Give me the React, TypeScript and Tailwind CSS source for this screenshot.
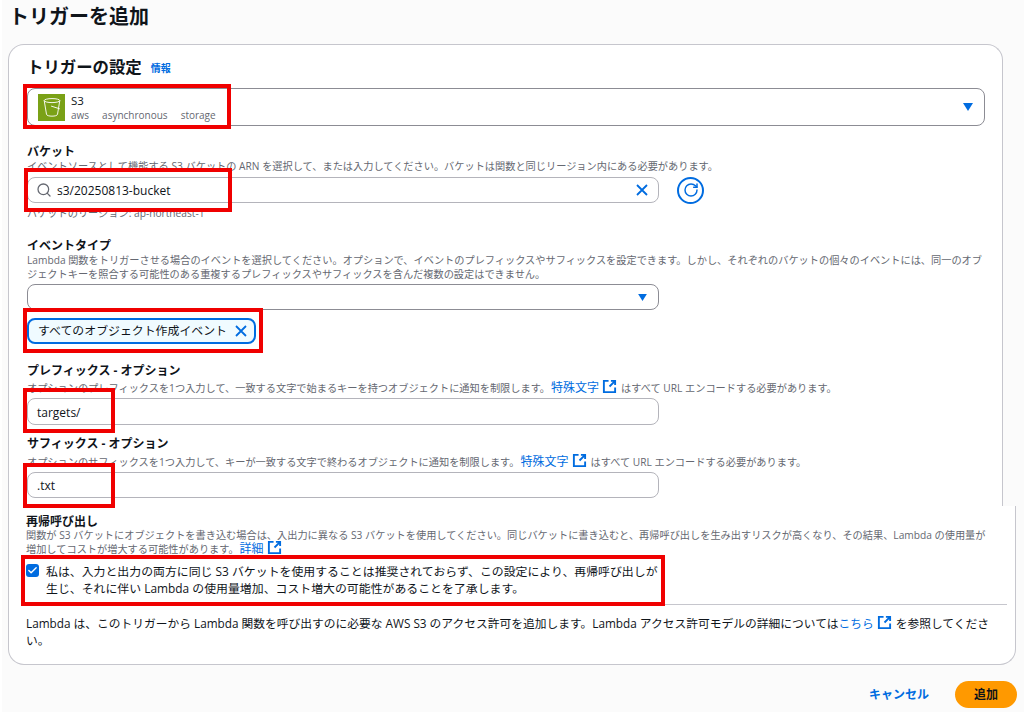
import { Check, RotateCw, Search } from "lucide-react";

const font = { fontFamily: '"Open Sans", "Noto Sans CJK JP", sans-serif' };

function External() {
  return (
    <svg viewBox="0 0 16 16" className="inline-block w-[15px] h-[15px] -my-1 ml-[3px] mr-[4px] align-[2px] text-[#006ce0]" fill="none" stroke="currentColor" strokeWidth="2">
      <path d="M7 2H2v12h12V9" />
      <path d="M9.500 2H14v4.500M14 2 8 8" />
    </svg>
  );
}

function Caret({ className }: { className: string }) {
  return (
    <svg viewBox="0 0 10 8" className={"text-[#006ce0] " + className} fill="currentColor">
      <path d="M0 0h10L5 8z" />
    </svg>
  );
}

function Cross() {
  return (
    <svg viewBox="0 0 12 12" className="w-3 h-3 text-[#006ce0]" fill="none" stroke="currentColor" strokeWidth="1.8">
      <path d="M1 1l10 10M11 1 1 11" />
    </svg>
  );
}

function RedBox({ className }: { className: string }) {
  return <div className={"absolute border-[4px] border-[#f00000] pointer-events-none " + className} />;
}

function Label({ children, className }: { children: React.ReactNode; className?: string }) {
  return <div className={"text-[12px] leading-[15px] font-bold text-[#0f141a] " + (className ?? "")}>{children}</div>;
}

function Desc({ children, className = "" }: { children: React.ReactNode; className?: string }) {
  return <div className={"text-[10.2px] leading-[14px] text-[#656871] " + className}>{children}</div>;
}

function DocLink({ children }: { children: React.ReactNode }) {
  return <a className="ml-[1px] text-[12px] leading-none text-[#006ce0]">{children}</a>;
}

function TextBox({ value, className }: { value: string; className: string }) {
  return (
    <div className={"w-[632px] flex items-center pl-[9px] pt-[2px] text-[12px] text-[#0f141a] bg-white border border-[#b4b4bb] rounded-[8px] " + className}>
      {value}
    </div>
  );
}

export default function App() {
  return (
    <div style={font} className="relative w-[1024px] h-[712px] overflow-hidden bg-white">
      <div className="h-full ml-[2px] bg-[#fbfbfb]">
        <h1 className="h-[44px] pl-[7px] pt-[2px] text-[20px] leading-[30px] font-bold text-[#0f141a]">トリガーを追加</h1>

        {/* upper card */}
        <section className="ml-[6px] w-[995px] bg-white border border-b-0 border-[#c6c6cd] rounded-t-[16px] pl-[18px] pb-2">
          <div className="mt-3 h-5 flex items-center gap-[9px]">
            <h2 className="text-[16.4px] font-bold text-[#0f141a]">トリガーの設定</h2>
            <a className="text-[10px] font-bold text-[#006ce0] mt-[2px]">情報</a>
          </div>

          <div className="mt-[11px] w-[958px] h-[38px] flex items-center justify-between pl-[10px] pr-[11px] border border-[#8c8c94] rounded-[8px]">
            <div className="flex items-center gap-[6px]">
              <div className="w-[27px] h-[27px] bg-[#7aa116] flex items-center justify-center">
                <svg viewBox="0 0 24 24" className="w-[22px] h-[22px]" fill="none" stroke="white" strokeWidth="1">
                  <ellipse cx="12" cy="5" rx="8.500" ry="2.200" />
                  <path d="M3.500 5 6 20c.3 1.400 3 2 6 2s5.700-.6 6-2l2.500-15" />
                  <path d="m11 11 9.500 3" />
                </svg>
              </div>
              <div className="pt-[2px]">
                <div className="text-[11.5px] leading-[14px] text-[#0f141a]">S3</div>
                <div className="flex gap-[13px] text-[10px] leading-[14px] text-[#656871]">
                  <span>aws</span>
                  <span>asynchronous</span>
                  <span>storage</span>
                </div>
              </div>
            </div>
            <Caret className="w-[10px] h-[8px]" />
          </div>

          <Label className="mt-[18px]">バケット</Label>
          <Desc>イベントソースとして機能する S3 バケットの ARN を選択して、または入力してください。バケットは関数と同じリージョン内にある必要があります。</Desc>
          <div className="mt-1 h-[26px] flex items-center gap-[18px]">
            <div className="w-[632px] h-[26px] flex items-center justify-between pl-[8px] pr-[10px] border border-[#b4b4bb] rounded-[8px]">
              <div className="flex items-center gap-[5px] text-[12px] text-[#0f141a]">
                <Search size={16} strokeWidth={1.9} className="text-[#656871]" />
                <span className="pt-[2px]">s3/20250813-bucket</span>
              </div>
              <Cross />
            </div>
            <div className="w-[27px] h-[27px] shrink-0 rounded-full border-2 border-[#006ce0] flex items-center justify-center">
              <RotateCw size={16} strokeWidth={2.2} className="text-[#006ce0]" />
            </div>
          </div>
          <Desc className="mt-[3px]">バケットのリージョン: ap-northeast-1</Desc>

          <Label className="mt-[18px]">イベントタイプ</Label>
          <Desc>
            Lambda 関数をトリガーさせる場合のイベントを選択してください。オプションで、イベントのプレフィックスやサフィックスを設定できます。しかし、それぞれのバケットの個々のイベントには、同一のオブ
            <br />
            ジェクトキーを照合する可能性のある重複するプレフィックスやサフィックスを含んだ複数の設定はできません。
          </Desc>
          <div className="mt-[3px] w-[632px] h-[26px] flex items-center justify-end pr-[11px] border border-[#8c8c94] rounded-[8px]">
            <Caret className="w-[9px] h-[7px]" />
          </div>
          <div className="mt-2 w-[229px] h-[26px] flex items-center justify-between pl-[9px] pr-[7px] bg-[#f0fbff] border-2 border-[#006ce0] rounded-[8px] text-[11.9px] text-[#0f141a]">
            すべてのオブジェクト作成イベント
            <Cross />
          </div>

          <Label className="mt-[19px]">プレフィックス - オプション</Label>
          <Desc className="mt-[3px]">
            オプションのプレフィックスを1つ入力して、一致する文字で始まるキーを持つオブジェクトに通知を制限します。
            <DocLink>特殊文字</DocLink>
            <External />
            はすべて URL エンコードする必要があります。
          </Desc>
          <TextBox value="targets/" className="mt-[3px] h-[27px]" />

          <Label className="mt-[11px]">サフィックス - オプション</Label>
          <Desc className="mt-1">
            オプションのサフィックスを1つ入力して、キーが一致する文字で終わるオブジェクトに通知を制限します。
            <DocLink>特殊文字</DocLink>
            <External />
            はすべて URL エンコードする必要があります。
          </Desc>
          <TextBox value=".txt" className="mt-[3px] h-[26px]" />
        </section>

        {/* lower part of the card */}
        <section className="ml-[6px] w-[1008px] bg-white border border-t-0 border-[#c6c6cd] rounded-b-[16px] pl-[17px] pr-[8px] pt-2 pb-[15px]">
          <Label>再帰呼び出し</Label>
          <Desc className="-mt-px">
            関数が S3 バケットにオブジェクトを書き込む場合は、入出力に異なる S3 バケットを使用してください。同じバケットに書き込むと、再帰呼び出しを生み出すリスクが高くなり、その結果、Lambda の使用量が
            <br />
            増加してコストが増大する可能性があります。
            <DocLink>詳細</DocLink>
            <External />
          </Desc>
          <div className="mt-[7px] flex gap-[7px] text-[11.9px] leading-[17px] text-[#0f141a]">
            <div className="mt-[1px] w-[13px] h-[13px] rounded-[3px] bg-[#006ce0] flex items-center justify-center">
              <Check size={11} strokeWidth={3} className="text-white" />
            </div>
            <div>
              私は、入力と出力の両方に同じ S3 バケットを使用することは推奨されておらず、この設定により、再帰呼び出しが
              <br />
              生じ、それに伴い Lambda の使用量増加、コスト増大の可能性があることを了承します。
            </div>
          </div>
          <div className="mt-[7px] h-px bg-[#c6c6cd]" />
          <div className="mt-[10px] text-[11.75px] leading-[17px] text-[#0f141a]">
            Lambda は、このトリガーから Lambda 関数を呼び出すのに必要な AWS S3 のアクセス許可を追加します。Lambda アクセス許可モデルの詳細については
            <a className="text-[#006ce0]">こちら</a>
            <External />
            を参照してくださ
            <br />
            い。
          </div>
        </section>

        <div className="mt-4 w-[1015px] flex items-center justify-end gap-[26px]">
          <a className="text-[12px] font-bold text-[#006ce0]">キャンセル</a>
          <button className="w-[62px] h-[27px] rounded-full bg-[#ff9900] text-[12px] font-bold text-[#0f141a]">追加</button>
        </div>
      </div>

      {/* red annotation boxes */}
      <RedBox className="left-[23px] top-[84px] w-[208px] h-[45px]" />
      <RedBox className="left-[24px] top-[168px] w-[208px] h-[44px]" />
      <RedBox className="left-[23px] top-[308px] w-[240px] h-[45px]" />
      <RedBox className="left-[23px] top-[388px] w-[92px] h-[45px]" />
      <RedBox className="left-[23px] top-[463px] w-[92px] h-[45px]" />
      <RedBox className="left-[21px] top-[555px] w-[644px] h-[51px]" />
    </div>
  );
}
